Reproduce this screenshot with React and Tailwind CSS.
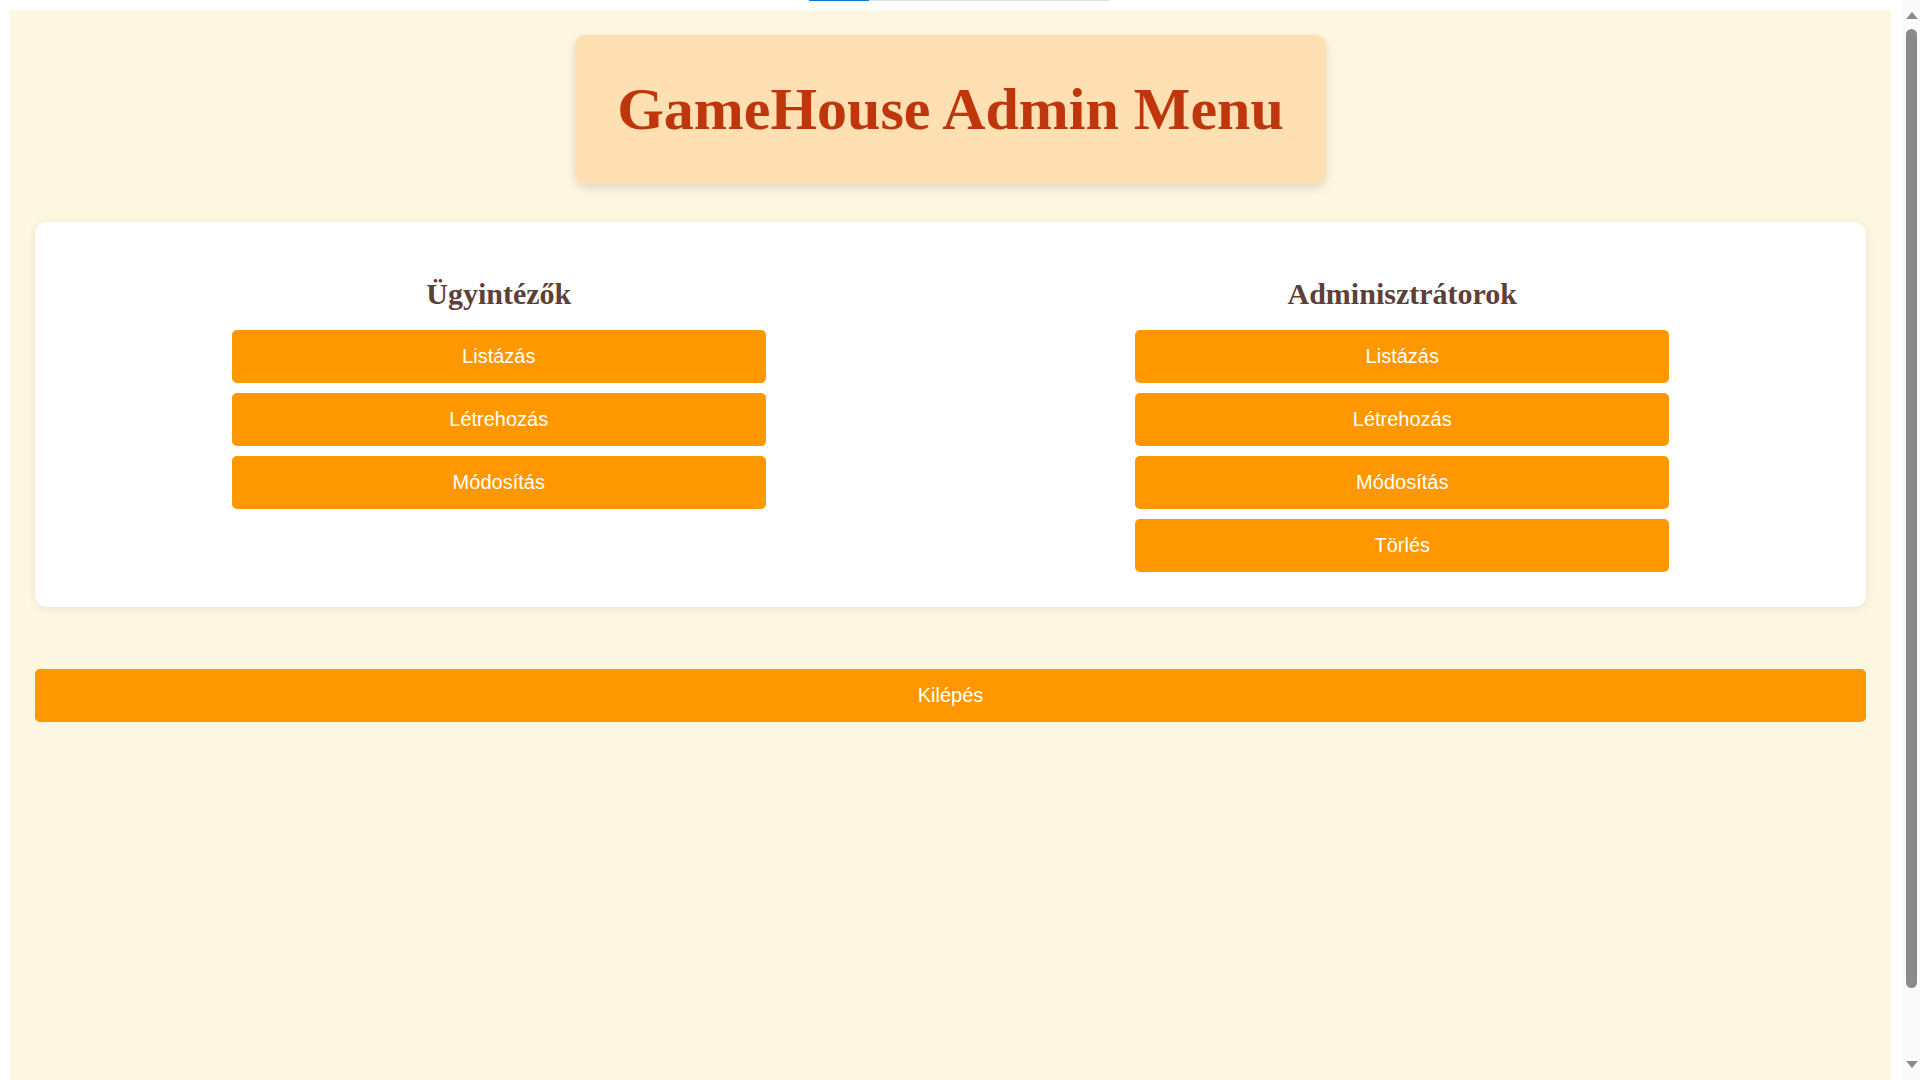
import React from "react";

const serif = { fontFamily: '"Liberation Serif", "Times New Roman", serif' };
const sans = { fontFamily: '"Liberation Sans", Arial, sans-serif' };

function Btn({ children, full }) {
  return (
    <button
      style={sans}
      className={
        (full ? "w-full " : "w-[534px] ") +
        "h-[53px] rounded-[5px] bg-[#ff9800] text-white text-[20px] leading-[23px] pb-[1px] flex items-center justify-center"
      }
    >
      {children}
    </button>
  );
}

function Column({ title, items }) {
  return (
    <div className="flex-1 flex flex-col items-center">
      <h2 style={serif} className="text-[30px] leading-[34px] font-bold text-[#5d4037] mb-[19px]">
        {title}
      </h2>
      <div className="w-full flex flex-col items-center gap-[10px]">
        {items.map((t) => (
          <Btn key={t}>{t}</Btn>
        ))}
      </div>
    </div>
  );
}

export default function App() {
  return (
    <div className="w-[1920px] h-screen bg-white flex overflow-hidden">
      <div className="flex-1 flex flex-col">
        <div className="h-[10px] flex items-start">
          <div className="ml-[809px] w-[301px] h-[1px] flex">
            <div className="w-[60px] h-full bg-[#0b78d4]" />
            <div className="flex-1 h-full bg-[#e1e1e1]" />
          </div>
        </div>
        <div className="flex-1 ml-[10px] mr-[12px] bg-[#fdf6e0] px-[25px] pt-[25px] flex flex-col">
          <div className="flex justify-center">
            <div className="bg-[#ffe0b2] rounded-[10px] shadow-[0_4px_10px_rgba(0,0,0,0.12)] px-[42px] pt-[39px] pb-[40px]">
              <h1 style={serif} className="text-[60px] leading-[70px] font-bold text-[#bf360c] whitespace-nowrap">
                GameHouse Admin Menu
              </h1>
            </div>
          </div>
          <div className="mt-[38px] bg-white rounded-xl shadow-[0_2px_10px_rgba(0,0,0,0.08)] px-[22px] pt-[55px] pb-[35px] flex gap-5 items-start">
            <Column title="Ügyintézők" items={["Listázás", "Létrehozás", "Módosítás"]} />
            <Column title="Adminisztrátorok" items={["Listázás", "Létrehozás", "Módosítás", "Törlés"]} />
          </div>
          <div className="mt-[62px]">
            <Btn full>Kilépés</Btn>
          </div>
        </div>
      </div>
      <div className="w-[17px] bg-[#fafafa] flex flex-col items-center">
        <div className="mt-[12px] w-0 h-0 border-l-[6px] border-r-[6px] border-b-[7px] border-l-transparent border-r-transparent border-b-[#8a8a8a]" />
        <div className="mt-[10px] w-[11px] h-[959px] rounded-full bg-[#8a8a8a]" />
        <div className="mt-[73px] w-0 h-0 border-l-[6px] border-r-[6px] border-t-[7px] border-l-transparent border-r-transparent border-t-[#8a8a8a]" />
      </div>
    </div>
  );
}
